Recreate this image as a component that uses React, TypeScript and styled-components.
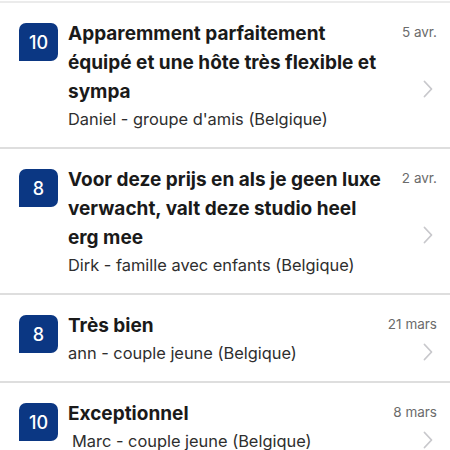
import React from 'react';
import styled, { createGlobalStyle } from 'styled-components';

const Global = createGlobalStyle`
  html, body { margin: 0; padding: 0; background: #ffffff; }
  body { font-family: Inter, "Liberation Sans", Arial, sans-serif; -webkit-font-smoothing: antialiased; }
`;

const List = styled.div`
  display: flex;
  flex-direction: column;
  border-top: 2px solid #ebebeb;
  width: 450px;
  height: 450px;
  overflow: hidden;
  margin-top: 1px;
`;

const Row = styled.div`
  display: flex;
  align-items: stretch;
  padding: 16px 13px 15px 19px;
  border-bottom: 2px solid #dedede;
  flex-shrink: 0;
`;

const Badge = styled.div`
  width: 39px;
  height: 38px;
  margin-top: 4px;
  flex-shrink: 0;
  background: #0b3783;
  color: #ffffff;
  border-radius: 7px 7px 7px 0;
  display: flex;
  align-items: center;
  justify-content: center;
  font-size: 18px;
  font-weight: 500;
`;

const Body = styled.div`
  flex: 1;
  min-width: 0;
  margin-left: 10px;
  margin-right: 2px;
`;

const Title = styled.div`
  font-size: 19px;
  font-weight: 700;
  line-height: 29px;
  color: #1a1a1a;
`;

const Subtitle = styled.div<{ $indent?: boolean }>`
  font-size: 16.4px;
  line-height: 26px;
  color: #2e2e2e;
  white-space: nowrap;
  padding-left: ${(p) => (p.$indent ? '4px' : '0')};
`;

const Side = styled.div`
  width: 50px;
  flex-shrink: 0;
  display: flex;
  flex-direction: column;
  align-items: flex-end;
`;

const DateText = styled.div`
  font-size: 13.5px;
  line-height: 26px;
  color: #6b6b6b;
  white-space: nowrap;
`;

const ChevronWrap = styled.div`
  flex: 1;
  display: flex;
  align-items: center;
  padding-right: 4px;
`;

const Chevron = () => (
  <svg width="10" height="18" viewBox="0 0 10 18" fill="none">
    <path d="M1.5 1.5 L8.5 9 L1.5 16.5" stroke="#c8c8cc" strokeWidth="1.8" strokeLinecap="round" strokeLinejoin="round" />
  </svg>
);

type Review = { score: number; title: string; author: string; date: string; indent?: boolean };

const reviews: Review[] = [
  { score: 10, title: 'Apparemment parfaitement équipé et une hôte très flexible et sympa', author: "Daniel - groupe d'amis (Belgique)", date: '5 avr.' },
  { score: 8, title: 'Voor deze prijs en als je geen luxe verwacht, valt deze studio heel erg mee', author: 'Dirk - famille avec enfants (Belgique)', date: '2 avr.' },
  { score: 8, title: 'Très bien', author: 'ann - couple jeune (Belgique)', date: '21 mars' },
  { score: 10, title: 'Exceptionnel', author: 'Marc - couple jeune (Belgique)', date: '8 mars', indent: true },
];

export default function App() {
  return (
    <>
      <Global />
      <List>
        {reviews.map((r, i) => (
          <Row key={i}>
            <Badge>{r.score}</Badge>
            <Body>
              <Title>{r.title}</Title>
              <Subtitle $indent={r.indent}>{r.author}</Subtitle>
            </Body>
            <Side>
              <DateText>{r.date}</DateText>
              <ChevronWrap>
                <Chevron />
              </ChevronWrap>
            </Side>
          </Row>
        ))}
      </List>
    </>
  );
}
